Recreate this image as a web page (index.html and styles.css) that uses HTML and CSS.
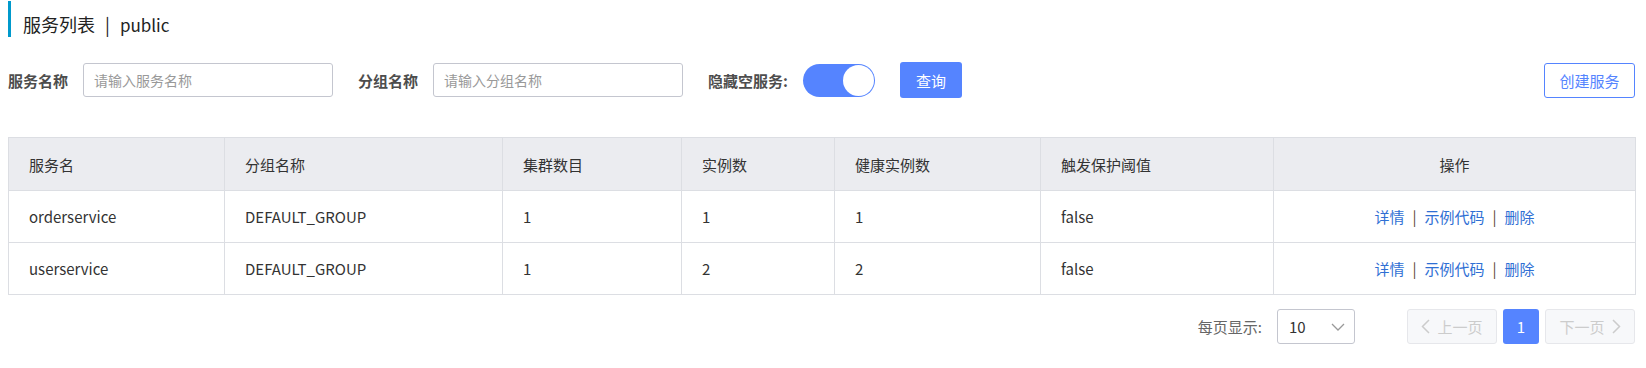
FILE: index.html
```html
<!DOCTYPE html>
<html lang="zh-CN">
<head>
    <meta charset="UTF-8">
    <title>服务列表</title>
    <link rel="stylesheet" href="styles.css">
</head>
<body>
<div class="page">

    <!-- Título -->
    <div class="page-title">服务列表<span class="title-sep">|</span><span class="title-ns">public</span></div>

    <!-- Filtros -->
    <div class="filter-bar">
        <div class="filter-item">
            <span class="filter-label">服务名称</span>
            <input class="text-input" type="text" placeholder="请输入服务名称">
        </div>
        <div class="filter-item">
            <span class="filter-label">分组名称</span>
            <input class="text-input" type="text" placeholder="请输入分组名称">
        </div>
        <div class="filter-item">
            <span class="filter-label">隐藏空服务:</span>
            <span class="switch"><span class="switch-knob"></span></span>
        </div>
        <button class="btn btn-primary">查询</button>
        <button class="btn btn-outline create-btn">创建服务</button>
    </div>

    <!-- Tabla -->
    <table class="service-table">
        <colgroup>
            <col style="width:216px">
            <col style="width:278px">
            <col style="width:179px">
            <col style="width:153px">
            <col style="width:206px">
            <col style="width:233px">
            <col style="width:362px">
        </colgroup>
        <thead>
            <tr>
                <th>服务名</th>
                <th>分组名称</th>
                <th>集群数目</th>
                <th>实例数</th>
                <th>健康实例数</th>
                <th>触发保护阈值</th>
                <th class="col-actions">操作</th>
            </tr>
        </thead>
        <tbody>
            <tr>
                <td>orderservice</td>
                <td>DEFAULT_GROUP</td>
                <td>1</td>
                <td>1</td>
                <td>1</td>
                <td>false</td>
                <td class="col-actions">
                    <a class="link" href="#">详情</a><span class="link-sep">|</span><a class="link" href="#">示例代码</a><span class="link-sep">|</span><a class="link" href="#">删除</a>
                </td>
            </tr>
            <tr>
                <td>userservice</td>
                <td>DEFAULT_GROUP</td>
                <td>1</td>
                <td>2</td>
                <td>2</td>
                <td>false</td>
                <td class="col-actions">
                    <a class="link" href="#">详情</a><span class="link-sep">|</span><a class="link" href="#">示例代码</a><span class="link-sep">|</span><a class="link" href="#">删除</a>
                </td>
            </tr>
        </tbody>
    </table>

    <!-- Paginación -->
    <div class="pager">
        <span class="pager-label">每页显示:</span>
        <div class="page-size">
            <span>10</span>
            <svg width="14" height="8" viewBox="0 0 14 8"><polyline points="1,1 7,7 13,1" fill="none" stroke="#999" stroke-width="1.3"/></svg>
        </div>
        <button class="page-btn" disabled>
            <svg width="9" height="15" viewBox="0 0 9 15"><polyline points="8,1 1.5,7.5 8,14" fill="none" stroke="#ccc" stroke-width="1.5"/></svg>
            上一页
        </button>
        <button class="page-num">1</button>
        <button class="page-btn" disabled>
            下一页
            <svg width="9" height="15" viewBox="0 0 9 15"><polyline points="1,1 7.5,7.5 1,14" fill="none" stroke="#ccc" stroke-width="1.5"/></svg>
        </button>
    </div>

</div>
</body>
</html>
```

FILE: styles.css
```css
/* Estilos generales */
body {
    margin: 0;
    font-family: "Noto Sans CJK SC", "Noto Sans", sans-serif;
    color: #333;
    background-color: #fff;
}

.page {
    padding: 1px 11px 25px 8px;
}

/* Título */
.page-title {
    height: 26px;
    padding-top: 10px;
    padding-left: 12px;
    border-left: 3px solid #0099cc;
    font-size: 18px;
    line-height: 26px;
    color: #222;
}
.title-sep {
    margin: 0 10px;
}
.title-ns {
    font-size: 17px;
}

/* Filtros */
.filter-bar {
    display: flex;
    align-items: center;
    height: 36px;
    margin-top: 25px;
}
.filter-item {
    display: flex;
    align-items: center;
    margin-right: 25px;
}
.filter-label {
    font-size: 15px;
    font-weight: bold;
    color: #4d4d4d;
    margin-right: 15px;
}
.text-input {
    box-sizing: border-box;
    width: 250px;
    height: 34px;
    padding: 0 10px;
    border: 1px solid #c4c6cf;
    border-radius: 3px;
    font-family: inherit;
    font-size: 14px;
    color: #333;
    outline: none;
}
.text-input::placeholder {
    color: #999;
}

/* Switch */
.switch {
    position: relative;
    display: inline-block;
    width: 72px;
    height: 33px;
    border-radius: 17px;
    background-color: #5584ff;
}
.switch-knob {
    position: absolute;
    top: 1px;
    right: 1px;
    width: 31px;
    height: 31px;
    border-radius: 50%;
    background-color: #fff;
}

/* Botones */
.btn {
    box-sizing: border-box;
    height: 36px;
    padding: 0 16px;
    border-radius: 3px;
    font-family: inherit;
    font-size: 15px;
    cursor: pointer;
}
.btn-primary {
    border: none;
    background-color: #5584ff;
    color: #fff;
}
.btn-outline {
    border: 1px solid #5584ff;
    background-color: #fff;
    color: #5584ff;
}
.create-btn {
    margin-left: auto;
    width: 91px;
    height: 35px;
    padding: 0;
}

/* Tabla */
.service-table {
    width: 100%;
    margin-top: 39px;
    border-collapse: collapse;
    table-layout: fixed;
    font-size: 15px;
}
.service-table th,
.service-table td {
    border: 1px solid #dcdee3;
    padding: 0 20px;
    text-align: left;
}
.service-table th {
    height: 52px;
    background-color: #ebecf0;
    font-weight: normal;
    color: #333;
}
.service-table td {
    height: 51px;
}
.service-table .col-actions {
    text-align: center;
}
.link {
    color: #2f6fd4;
    text-decoration: none;
}
.link-sep {
    margin: 0 8px;
    color: #5a4a3a;
}

/* Paginación */
.pager {
    display: flex;
    align-items: center;
    justify-content: flex-end;
    height: 35px;
    margin-top: 14px;
}
.pager-label {
    font-size: 15px;
    color: #666;
    margin-right: 15px;
}
.page-size {
    box-sizing: border-box;
    display: flex;
    align-items: center;
    justify-content: space-between;
    width: 78px;
    height: 35px;
    padding: 0 9px 0 11px;
    border: 1px solid #c4c6cf;
    border-radius: 3px;
    font-size: 15px;
    color: #333;
    margin-right: 52px;
}
.page-btn {
    box-sizing: border-box;
    display: flex;
    align-items: center;
    justify-content: center;
    gap: 7px;
    width: 90px;
    height: 35px;
    border: 1px solid #e6e7eb;
    border-radius: 3px;
    background-color: #f7f8fa;
    color: #ccc;
    font-family: inherit;
    font-size: 15px;
}
.page-num {
    box-sizing: border-box;
    width: 36px;
    height: 35px;
    margin: 0 6px;
    border: none;
    border-radius: 3px;
    background-color: #5584ff;
    color: #fff;
    font-family: inherit;
    font-size: 15px;
}
```
